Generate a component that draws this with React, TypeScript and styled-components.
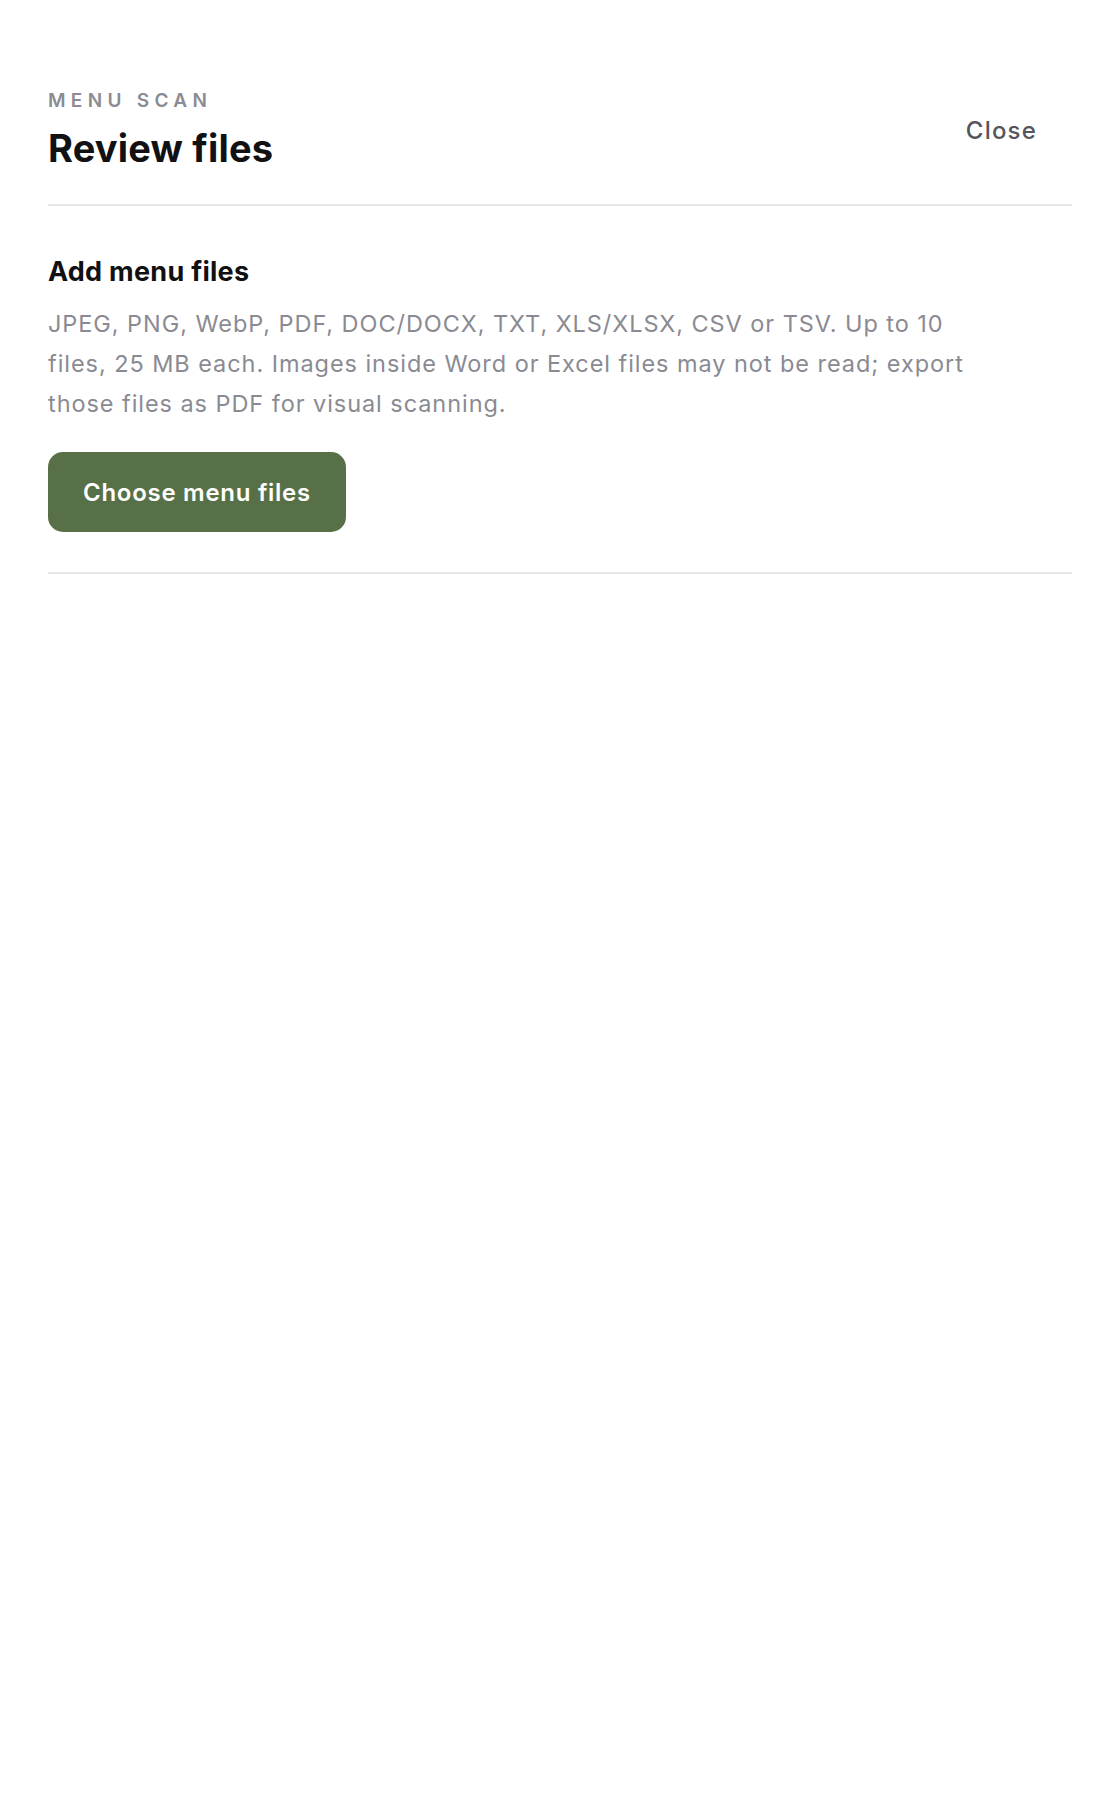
import React from 'react';
import styled, { createGlobalStyle } from 'styled-components';

const GlobalStyle = createGlobalStyle`
  html, body {
    margin: 0;
    padding: 0;
    background: #ffffff;
  }
  body {
    font-family: Inter, "Noto Sans", "Liberation Sans", sans-serif;
    -webkit-font-smoothing: antialiased;
  }
`;

const Page = styled.div`
  min-height: 1800px;
  box-sizing: border-box;
  padding: 90px 48px 48px;
  background: #ffffff;
`;

const Header = styled.header`
  display: flex;
  align-items: center;
  justify-content: space-between;
  padding-bottom: 33px;
  border-bottom: 2px solid #e8e8ec;
`;

const TitleGroup = styled.div`
  display: flex;
  flex-direction: column;
  gap: 13px;
`;

const Eyebrow = styled.span`
  font-size: 19px;
  font-weight: 600;
  letter-spacing: 0.28em;
  line-height: 1.2;
  color: #8b8b93;
  text-transform: uppercase;
`;

const Title = styled.h1`
  margin: 0;
  font-size: 38px;
  font-weight: 700;
  line-height: 1.2;
  color: #111113;
  letter-spacing: 0.005em;
`;

const CloseButton = styled.button`
  border: none;
  background: transparent;
  padding: 12px 35px;
  font-family: inherit;
  font-size: 24px;
  font-weight: 500;
  letter-spacing: 0.05em;
  color: #55555d;
  cursor: pointer;
`;

const Section = styled.section`
  padding: 48px 0 40px;
  border-bottom: 2px solid #e8e8ec;
`;

const SectionTitle = styled.h2`
  margin: 0 0 15px;
  font-size: 27px;
  font-weight: 700;
  line-height: 1.3;
  color: #111113;
  letter-spacing: 0.01em;
`;

const Hint = styled.p`
  margin: 0 0 28px;
  max-width: 940px;
  font-size: 23.5px;
  line-height: 40px;
  letter-spacing: 0.04em;
  color: #8a8a92;
`;

const PrimaryButton = styled.button`
  display: inline-flex;
  align-items: center;
  height: 80px;
  padding: 0 35px;
  border: none;
  border-radius: 15px;
  background: #587048;
  color: #ffffff;
  font-family: inherit;
  font-size: 24px;
  font-weight: 600;
  letter-spacing: 0.03em;
  cursor: pointer;
`;

export default function App() {
  return (
    <>
      <GlobalStyle />
      <Page>
        <Header>
          <TitleGroup>
            <Eyebrow>Menu scan</Eyebrow>
            <Title>Review files</Title>
          </TitleGroup>
          <CloseButton type="button">Close</CloseButton>
        </Header>
        <Section>
          <SectionTitle>Add menu files</SectionTitle>
          <Hint>
            JPEG, PNG, WebP, PDF, DOC/DOCX, TXT, XLS/XLSX, CSV or TSV. Up to 10 files, 25 MB each.
            Images inside Word or Excel files may not be read; export those files as PDF for visual
            scanning.
          </Hint>
          <PrimaryButton type="button">Choose menu files</PrimaryButton>
        </Section>
      </Page>
    </>
  );
}
